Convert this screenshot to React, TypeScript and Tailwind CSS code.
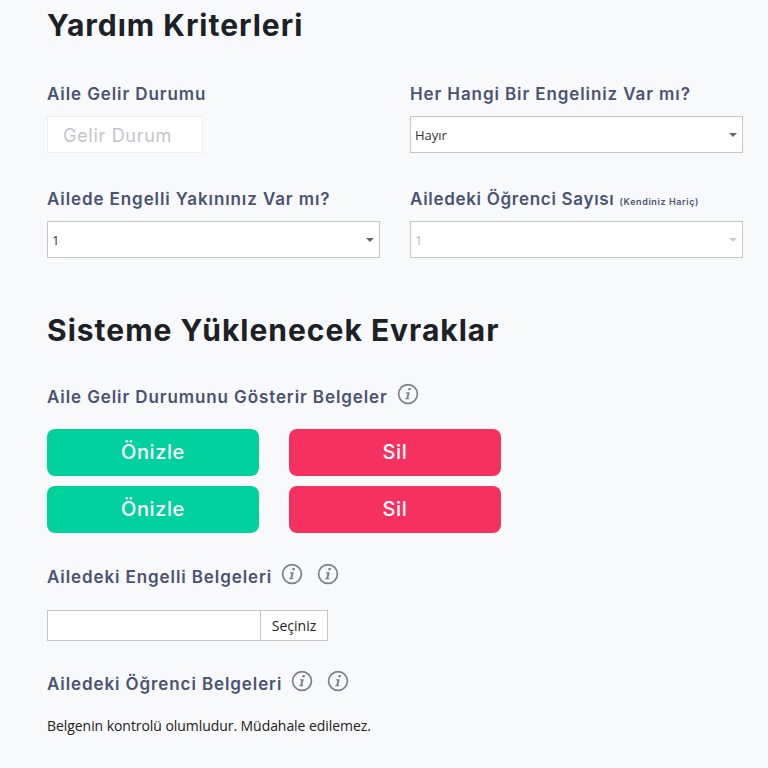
import type { ReactNode } from "react";

const labelBase = "text-[17px] leading-[22px] font-semibold text-[#4a5372]";
const labelClass = `${labelBase} tracking-[0.9px]`;
const bodyFont = "font-['Open_Sans',sans-serif]";

function InfoIcon() {
	return (
		<svg width="22" height="22" viewBox="0 0 22 22" fill="none" className="shrink-0 -translate-y-[3px]">
			<circle cx="11" cy="11" r="9.4" stroke="#7d8088" strokeWidth="1.7" />
			<path d="M11.6 5h2.4l-.5 2.2h-2.4z" fill="#7d8088" />
			<path
				d="M8.9 9.2h3.9l-1.4 5.6c-.1.4.1.5 1 .5l-.2.9H8.1l.2-.9c.8 0 1-.1 1.1-.6l.9-3.7c.1-.5-.1-.6-1-.6z"
				fill="#7d8088"
			/>
		</svg>
	);
}

function SelectBox({ value, disabled }: { value: string; disabled?: boolean }) {
	return (
		<div className="flex h-[37px] items-center justify-between border border-[#c4c6ca] bg-white pr-[5px] pl-[4px]">
			<span className={`${bodyFont} translate-y-[1px] text-[13px] ${disabled ? "text-[#b5b7ba]" : "text-[#333]"}`}>{value}</span>
			<span
				className={`h-0 w-0 border-x-[4px] border-t-[4px] border-x-transparent ${disabled ? "border-t-[#c9cacc]" : "border-t-[#666]"}`}
			/>
		</div>
	);
}

function Heading({ children }: { children: ReactNode }) {
	return <h2 className="text-[30px] leading-[36px] font-bold tracking-[1px] text-[#1c2126]">{children}</h2>;
}

function ActionRow() {
	return (
		<div className="flex gap-[30px]">
			<button className="h-[47px] w-[212px] rounded-[8px] bg-[#00d19d] pb-[1px] text-[20px] font-medium tracking-[0.6px] text-white">Önizle</button>
			<button className="h-[47px] w-[212px] rounded-[8px] bg-[#f5325f] pb-[1px] text-[20px] font-medium tracking-[0.6px] text-white">Sil</button>
		</div>
	);
}

export default function App() {
	return (
		<div className="h-[768px] w-[768px] overflow-hidden bg-[#f7f9fb] pt-[7px] pr-[26px] pl-[47px] font-['Inter',sans-serif]">
			<Heading>Yardım Kriterleri</Heading>

			<div className="mt-[40px] grid grid-cols-[333px_333px] gap-x-[30px] gap-y-[35px]">
				<div className="flex flex-col gap-[11px]">
					<label className={labelClass}>Aile Gelir Durumu</label>
					<div className="flex h-[37px] w-[156px] items-center border border-[#eceef1] bg-white pt-[2px] pl-[15px] text-[18px] tracking-[0.7px] text-[#c3c5cb]">
						Gelir Durum
					</div>
				</div>
				<div className="flex flex-col gap-[11px]">
					<label className={labelClass}>Her Hangi Bir Engeliniz Var mı?</label>
					<SelectBox value="Hayır" />
				</div>
				<div className="flex flex-col gap-[11px]">
					<label className={labelClass}>Ailede Engelli Yakınınız Var mı?</label>
					<SelectBox value="1" />
				</div>
				<div className="flex flex-col gap-[11px]">
					<label className={`${labelBase} flex items-baseline gap-[5px] tracking-[0.7px]`}>
						Ailedeki Öğrenci Sayısı
						<span className="text-[9px] leading-[9px] font-semibold tracking-[0.6px]">(Kendiniz Hariç)</span>
					</label>
					<SelectBox value="1" disabled />
				</div>
			</div>

			<div className="mt-[54px]">
				<Heading>Sisteme Yüklenecek Evraklar</Heading>
			</div>

			<div className="mt-[38px] flex items-center gap-[9px]">
				<span className={labelClass}>Aile Gelir Durumunu Gösterir Belgeler</span>
				<InfoIcon />
			</div>

			<div className="mt-[21px] flex flex-col gap-[10px]">
				<ActionRow />
				<ActionRow />
			</div>

			<div className="mt-[33px] flex items-center gap-[9px]">
				<span className={labelClass}>Ailedeki Engelli Belgeleri</span>
				<div className="flex gap-[14px]">
					<InfoIcon />
					<InfoIcon />
				</div>
			</div>

			<div className="mt-[22px] flex h-[31px] w-[281px] border border-[#c4c6ca] bg-white">
				<div className="flex-1" />
				<div className={`${bodyFont} flex w-[67px] items-center justify-center border-l border-[#c4c6ca] text-[14px] text-[#222]`}>
					Seçiniz
				</div>
			</div>

			<div className="mt-[32px] flex items-center gap-[9px]">
				<span className={labelClass}>Ailedeki Öğrenci Belgeleri</span>
				<div className="flex gap-[14px]">
					<InfoIcon />
					<InfoIcon />
				</div>
			</div>

			<p className={`${bodyFont} mt-[21px] text-[14px] leading-[20px] tracking-[-0.06px] text-[#222]`}>Belgenin kontrolü olumludur. Müdahale edilemez.</p>
		</div>
	);
}
